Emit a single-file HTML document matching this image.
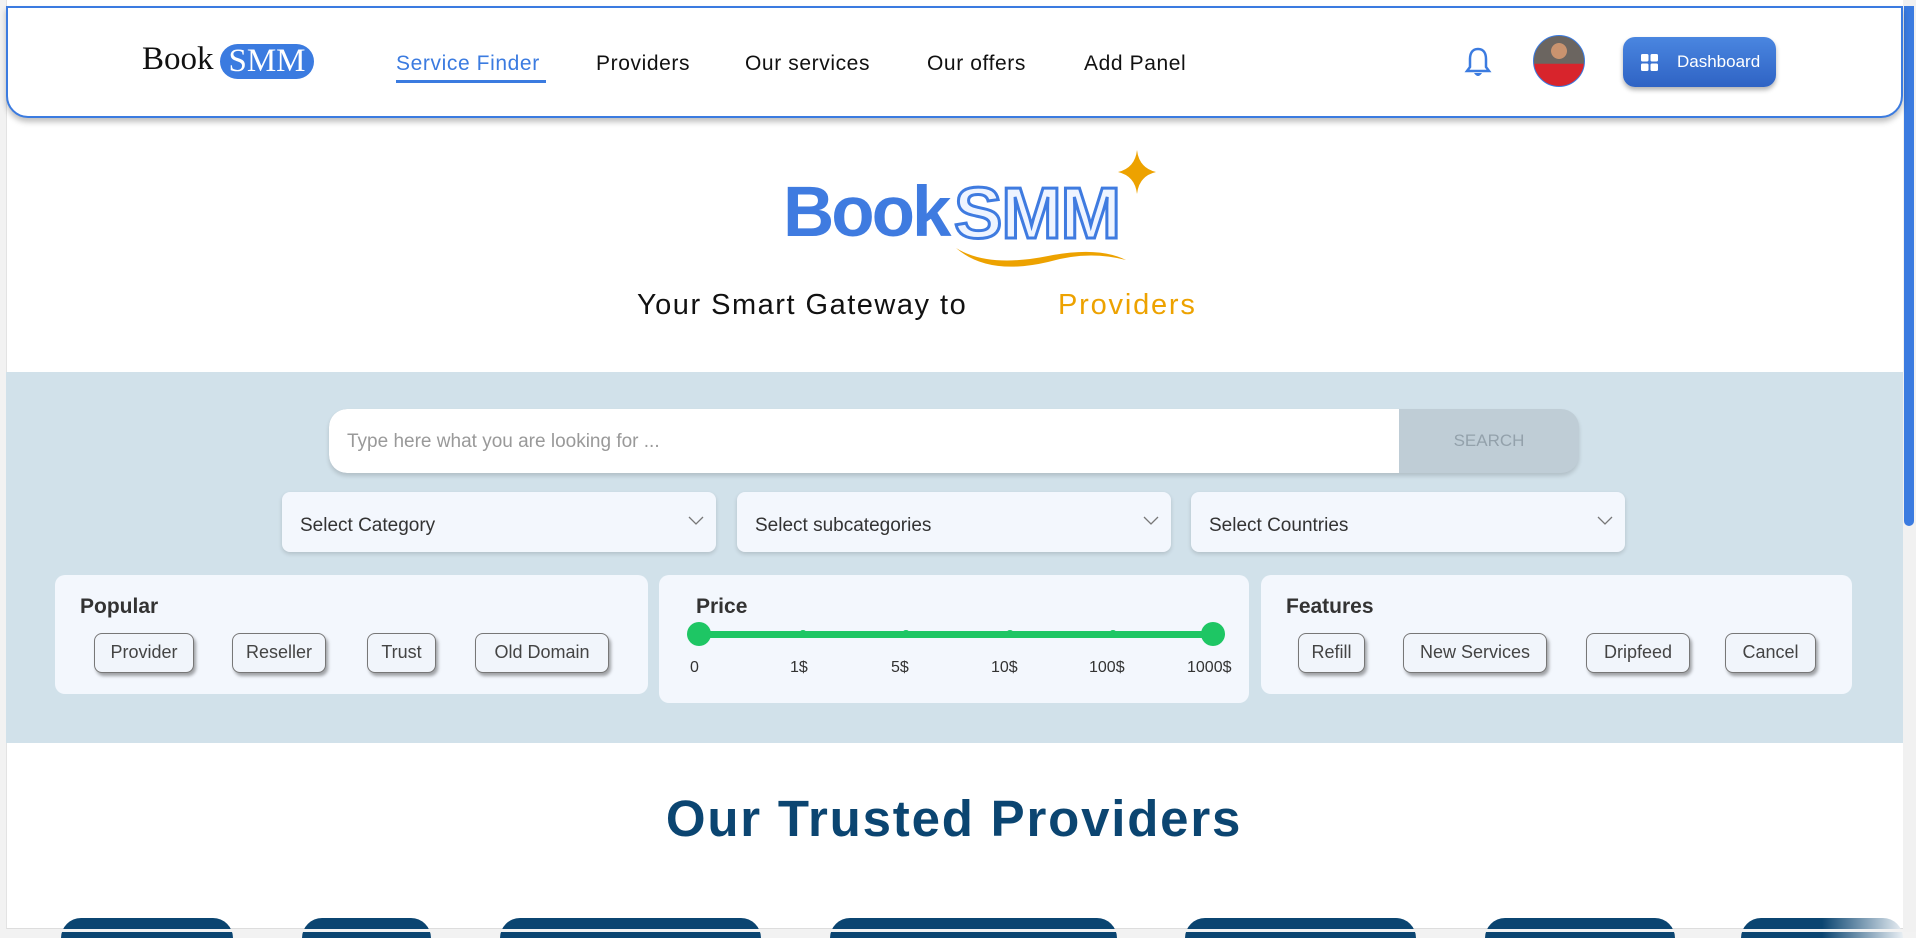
<!DOCTYPE html>
<html><head><meta charset="utf-8"><style>
*{box-sizing:border-box;margin:0;padding:0}
body{width:1916px;height:932px;overflow:hidden;background:#f2f2f2;font-family:"Liberation Sans",sans-serif;position:relative}
.page{position:absolute;left:6px;top:0;width:1897px;height:929px;background:#fff;border-left:1px solid #e3e3e3;border-bottom:1px solid #ddd}
.abs{position:absolute}
.hdr{position:absolute;left:6px;top:6px;width:1897px;height:112px;border:2px solid #3b7be0;border-top-width:2px;border-radius:0 0 22px 22px;background:#fff;box-shadow:0 4px 6px rgba(0,0,0,.25);z-index:2}
.nav{position:absolute;top:52px;font-size:21px;color:#111;letter-spacing:0.6px}
.band{position:absolute;left:6px;top:372px;width:1897px;height:371px;background:#d1e1ea}
.sel{position:absolute;top:492px;height:60px;background:#f3f7fd;border-radius:8px;box-shadow:0 2px 4px rgba(0,0,0,.15);font-size:19px;color:#333;padding:23px 0 0 18px}
.sel svg{position:absolute;right:12px;top:24px}
.card{position:absolute;top:575px;height:119px;background:#f3f7fd;border-radius:10px}
.card h4{position:absolute;left:25px;top:20px;font-size:21px;color:#333;font-weight:bold}
.chip{position:absolute;top:633px;height:40px;border:1.5px solid #777;border-radius:8px;background:#f1f5fb;box-shadow:2px 3px 3px rgba(0,0,0,.35);font-size:18px;color:#444;text-align:center;line-height:37px}
.lbl{position:absolute;top:659px;font-size:16px;color:#333}
.dot{position:absolute;top:630px;width:8px;height:8px;border-radius:50%;background:#1ec664}
.pill{position:absolute;top:918px;height:20px;background:#0b4571;border-radius:22px 22px 0 0}
</style></head><body>
<div class="page"></div>
<div class="hdr"></div>
<div class="abs" style="z-index:3;left:142px;top:41px;font-family:'Liberation Serif',serif;font-size:33px;color:#111">Book</div>
<div class="abs" style="z-index:3;left:220px;top:44px;width:94px;height:35px;background:#3b7be0;border-radius:18px;font-family:'Liberation Serif',serif;font-size:33px;color:#fff;text-align:center;line-height:35px">SMM</div>
<div class="nav" style="z-index:3;left:396px;color:#3b7be0">Service Finder</div>
<div class="abs" style="z-index:3;left:396px;top:80px;width:150px;height:3px;background:#3b7be0"></div>
<div class="nav" style="z-index:3;left:596px">Providers</div>
<div class="nav" style="z-index:3;left:745px">Our services</div>
<div class="nav" style="z-index:3;left:927px">Our offers</div>
<div class="nav" style="z-index:3;left:1084px">Add Panel</div>
<svg class="abs" style="z-index:3;left:1464px;top:46px" width="28" height="32" viewBox="0 0 28 32"><path d="M14 3 C8 3 6 8 6 13 L6 21 L3 25 L25 25 L22 21 L22 13 C22 8 20 3 14 3Z" fill="none" stroke="#3b7be0" stroke-width="2.5"/><path d="M10 27 Q14 33 18 27Z" fill="#3b7be0"/></svg>
<div class="abs" style="z-index:3;left:1533px;top:35px;width:52px;height:52px;border-radius:50%;background:radial-gradient(circle at 50% 30%,#c9936f 0 18%,transparent 19%),linear-gradient(#6b6560 0 55%,#d8242c 56%);border:1px solid #3b7be0"></div>
<div class="abs" style="z-index:3;left:1623px;top:37px;width:153px;height:50px;border-radius:12px;background:linear-gradient(#4a86e0,#2f63c4);box-shadow:0 3px 5px rgba(0,0,0,.3);color:#fff;font-size:17px;line-height:50px;padding-left:54px">Dashboard</div>
<svg class="abs" style="z-index:3;left:1641px;top:54px" width="17" height="17"><rect x="0" y="0" width="7.5" height="7.5" rx="1.5" fill="#fff"/><rect x="9.5" y="0" width="7.5" height="7.5" rx="1.5" fill="#fff"/><rect x="0" y="9.5" width="7.5" height="7.5" rx="1.5" fill="#fff"/><rect x="9.5" y="9.5" width="7.5" height="7.5" rx="1.5" fill="#fff"/></svg>

<div class="abs" style="left:783px;top:172px;font-size:71px;font-weight:bold;color:#3f7be0;letter-spacing:-3px">Book</div>
<svg class="abs" style="left:948px;top:150px" width="220" height="120"><text x="6" y="88" font-family="Liberation Sans" font-weight="bold" font-size="72" fill="#eef4ff" stroke="#3f7be0" stroke-width="3" letter-spacing="-1" textLength="166" lengthAdjust="spacingAndGlyphs">SMM</text><path d="M189 0 Q191 18 208 22 Q191 26 189 44 Q187 26 170 22 Q187 18 189 0Z" fill="#eda200"/><path d="M8 98 Q40 118 100 106 Q150 96 178 110 Q140 100 100 112 Q40 126 8 98Z" fill="#eda200"/></svg>
<div class="abs" style="left:637px;top:289px;font-size:29px;color:#111;letter-spacing:1.5px">Your Smart Gateway to</div>
<div class="abs" style="left:1058px;top:289px;font-size:29px;color:#eda200;letter-spacing:1.8px">Providers</div>

<div class="band"></div>
<div class="abs" style="left:329px;top:409px;width:1250px;height:64px;border-radius:18px;background:#bfcdd6;overflow:hidden;box-shadow:0 3px 4px rgba(0,0,0,.15)">
<div class="abs" style="left:0;top:0;width:1070px;height:64px;background:#fff;border-radius:18px 0 0 18px;font-size:19px;color:#999;padding:22px 0 0 18px">Type here what you are looking for ...</div>
<div class="abs" style="left:1070px;top:0;width:180px;height:64px;text-align:center;line-height:64px;font-size:17px;color:#93a1ab">SEARCH</div></div>
<div class="sel" style="left:282px;width:434px">Select Category<svg width="16" height="10"><path d="M1 1 L8 8 L15 1" fill="none" stroke="#777" stroke-width="1.3"/></svg></div>
<div class="sel" style="left:737px;width:434px">Select subcategories<svg width="16" height="10"><path d="M1 1 L8 8 L15 1" fill="none" stroke="#777" stroke-width="1.3"/></svg></div>
<div class="sel" style="left:1191px;width:434px">Select Countries<svg width="16" height="10"><path d="M1 1 L8 8 L15 1" fill="none" stroke="#777" stroke-width="1.3"/></svg></div>

<div class="card" style="left:55px;width:593px"><h4>Popular</h4></div>
<div class="card" style="left:659px;width:590px;height:128px"><h4 style="left:37px">Price</h4></div>
<div class="card" style="left:1261px;width:591px"><h4>Features</h4></div>
<div class="chip" style="left:94px;width:100px">Provider</div>
<div class="chip" style="left:232px;width:94px">Reseller</div>
<div class="chip" style="left:367px;width:69px">Trust</div>
<div class="chip" style="left:475px;width:134px">Old Domain</div>
<div class="abs" style="left:699px;top:631px;width:514px;height:7px;background:#1ec664;border-radius:4px"></div>
<div class="dot" style="left:799px"></div><div class="dot" style="left:902px"></div><div class="dot" style="left:1006px"></div><div class="dot" style="left:1109px"></div>
<div class="abs" style="left:687px;top:622px;width:24px;height:24px;border-radius:50%;background:#1ec664"></div>
<div class="abs" style="left:1201px;top:622px;width:24px;height:24px;border-radius:50%;background:#1ec664"></div>
<div class="lbl" style="left:690px">0</div><div class="lbl" style="left:790px">1$</div><div class="lbl" style="left:891px">5$</div><div class="lbl" style="left:991px">10$</div><div class="lbl" style="left:1089px">100$</div><div class="lbl" style="left:1187px">1000$</div>
<div class="chip" style="left:1298px;width:67px">Refill</div>
<div class="chip" style="left:1403px;width:144px">New Services</div>
<div class="chip" style="left:1586px;width:104px">Dripfeed</div>
<div class="chip" style="left:1725px;width:91px">Cancel</div>

<div class="abs" style="left:0;width:1908px;top:789px;text-align:center;font-size:51px;font-weight:bold;color:#0b4571;letter-spacing:1.8px">Our Trusted Providers</div>
<div class="pill" style="left:61px;width:172px"></div>
<div class="pill" style="left:302px;width:129px"></div>
<div class="pill" style="left:500px;width:261px"></div>
<div class="pill" style="left:830px;width:287px"></div>
<div class="pill" style="left:1185px;width:231px"></div>
<div class="pill" style="left:1485px;width:190px"></div>
<div class="pill" style="left:1741px;width:162px;background:linear-gradient(90deg,#0b4571 50%,#e8eef3)"></div>
<div class="abs" style="left:0;top:929px;width:1916px;height:3px;background:#f2f2f2"></div>
<div class="abs" style="left:1903px;top:0;width:13px;height:932px;background:#f1f1f1"></div>
<div class="abs" style="left:1904px;top:6px;width:10px;height:520px;background:#3b7be0;border-radius:0 0 5px 5px"></div>
</body></html>
